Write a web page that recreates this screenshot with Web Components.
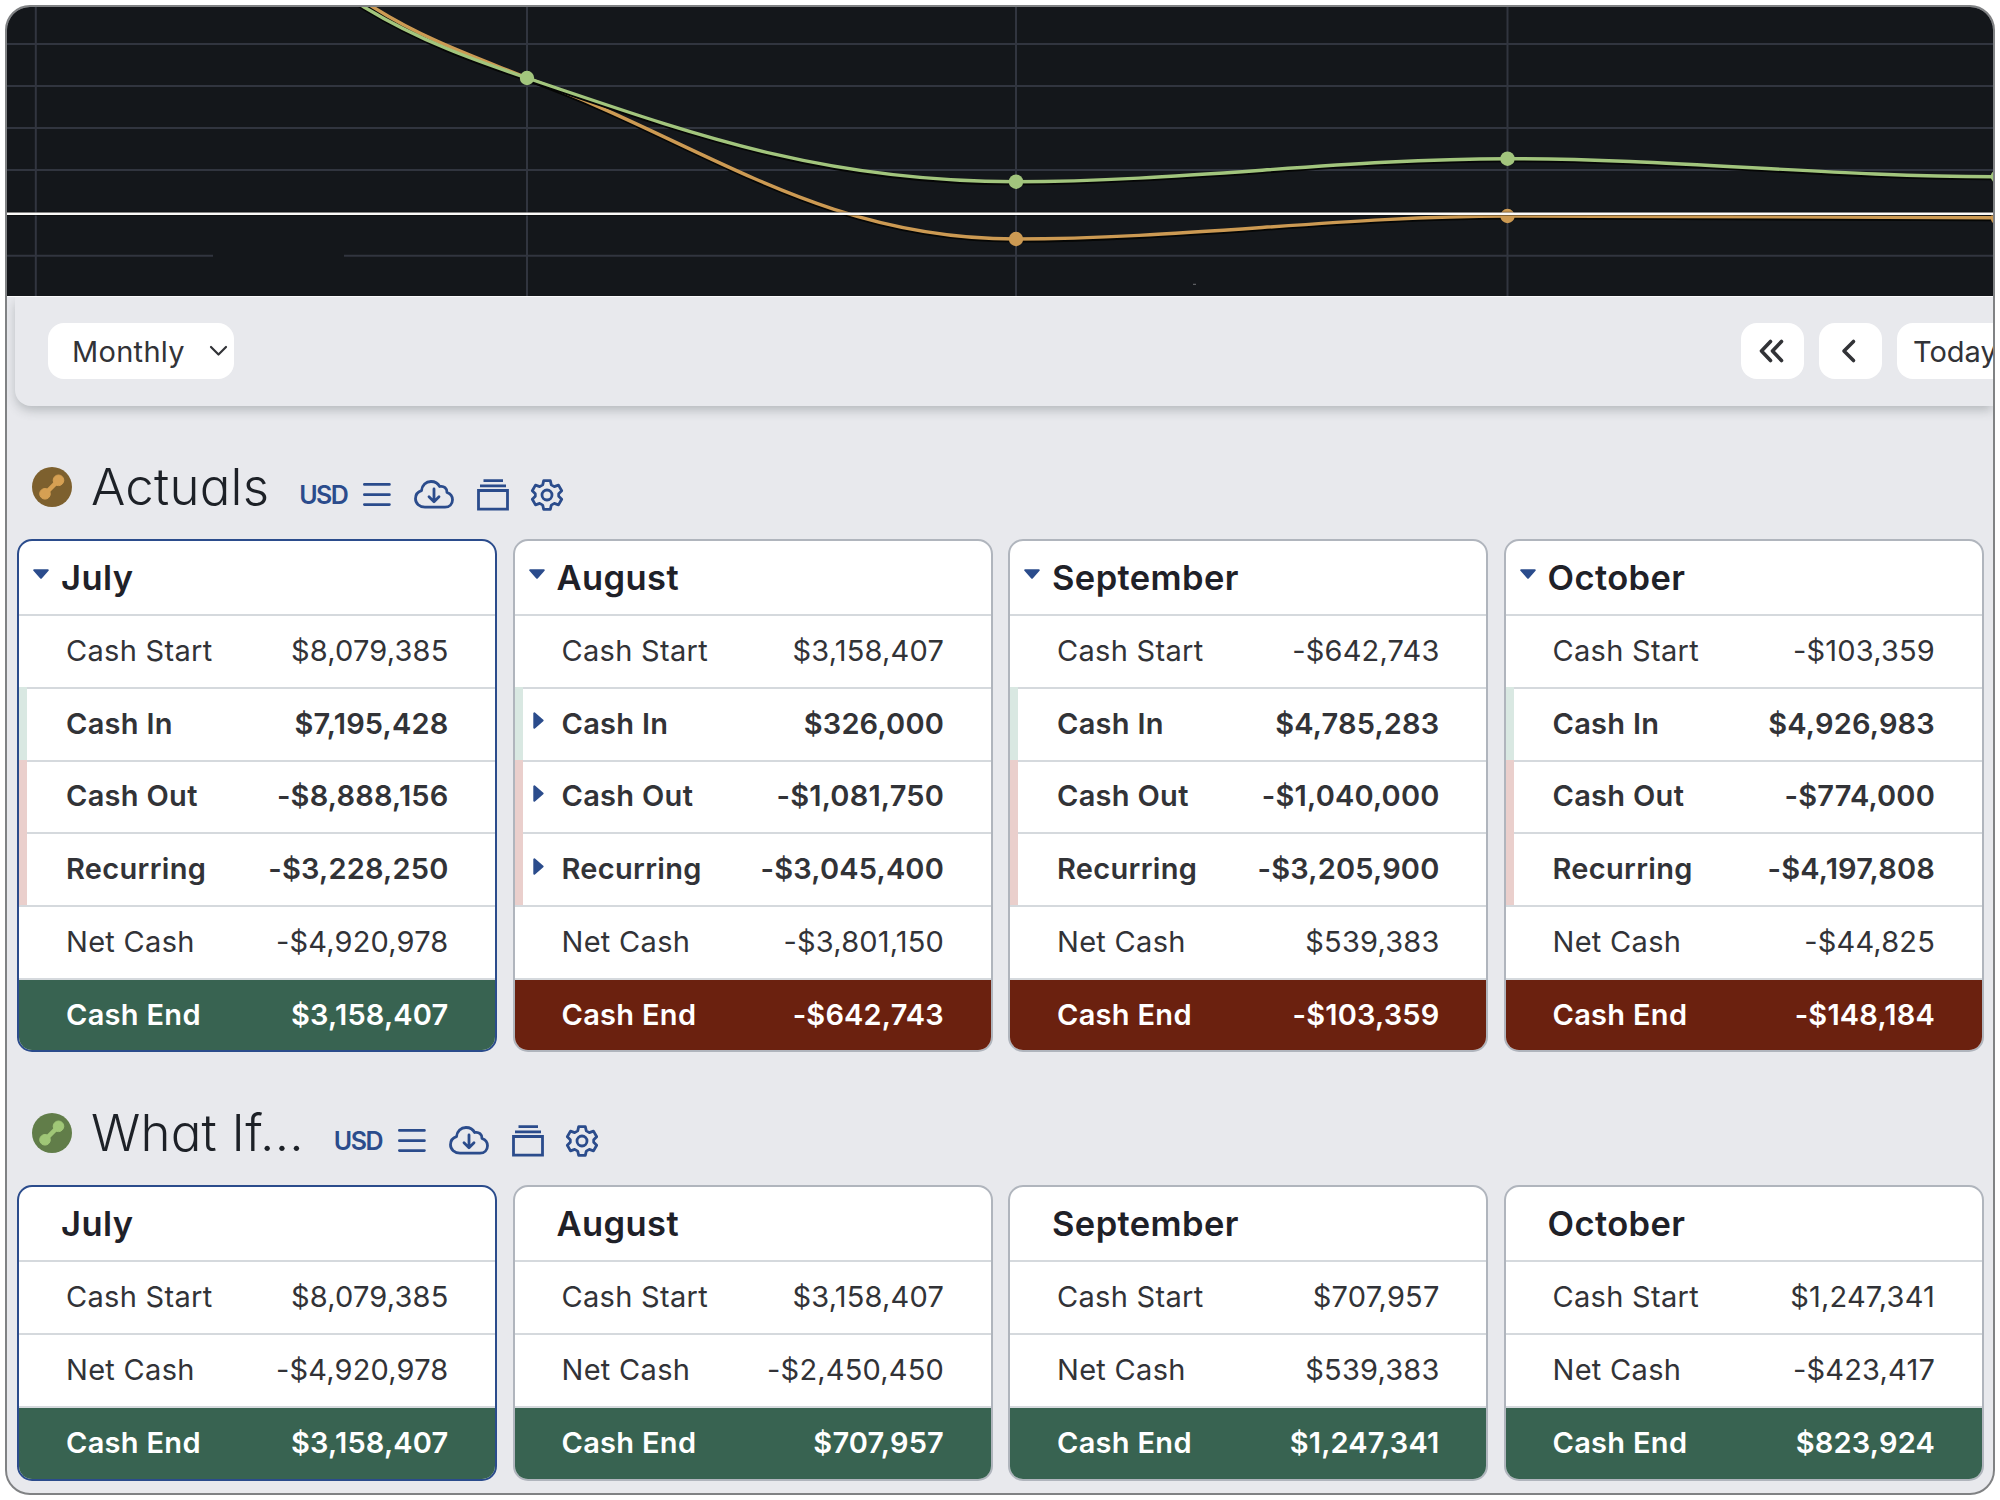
<!DOCTYPE html>
<html lang="en">
<head>
<meta charset="utf-8">
<title>Cash forecast</title>
<style>
    body {
        margin: 0;
        padding: 5px;
        background: #fff;
        font-family: Inter, "Liberation Sans", sans-serif;
        color: #323337;
        --blue: #2b4c8c;
        --line: #d5d9dd;
    }
</style>
</head>
<body>
<cash-frame>
    <forecast-chart></forecast-chart>
    <period-bar></period-bar>
    <plan-section name="Actuals" plan="actuals"></plan-section>
    <plan-section name="What If..." plan="whatif"></plan-section>
</cash-frame>

<script>
const plans = {
    actuals: {
        disc: "#7d602e",
        mark: "#d6a053",
        months: [
            {name: "July", current: true, toggle: true, rows: [
                ["Cash Start", "$8,079,385"], ["Cash In", "$7,195,428", "in"], ["Cash Out", "-$8,888,156", "out"],
                ["Recurring", "-$3,228,250", "out"], ["Net Cash", "-$4,920,978"], ["Cash End", "$3,158,407", "good"]]},
            {name: "August", toggle: true, expandable: true, rows: [
                ["Cash Start", "$3,158,407"], ["Cash In", "$326,000", "in"], ["Cash Out", "-$1,081,750", "out"],
                ["Recurring", "-$3,045,400", "out"], ["Net Cash", "-$3,801,150"], ["Cash End", "-$642,743", "bad"]]},
            {name: "September", toggle: true, rows: [
                ["Cash Start", "-$642,743"], ["Cash In", "$4,785,283", "in"], ["Cash Out", "-$1,040,000", "out"],
                ["Recurring", "-$3,205,900", "out"], ["Net Cash", "$539,383"], ["Cash End", "-$103,359", "bad"]]},
            {name: "October", toggle: true, rows: [
                ["Cash Start", "-$103,359"], ["Cash In", "$4,926,983", "in"], ["Cash Out", "-$774,000", "out"],
                ["Recurring", "-$4,197,808", "out"], ["Net Cash", "-$44,825"], ["Cash End", "-$148,184", "bad"]]}
        ]
    },
    whatif: {
        disc: "#617d49",
        mark: "#a0c777",
        months: [
            {name: "July", current: true, rows: [
                ["Cash Start", "$8,079,385"], ["Net Cash", "-$4,920,978"], ["Cash End", "$3,158,407", "good"]]},
            {name: "August", rows: [
                ["Cash Start", "$3,158,407"], ["Net Cash", "-$2,450,450"], ["Cash End", "$707,957", "good"]]},
            {name: "September", rows: [
                ["Cash Start", "$707,957"], ["Net Cash", "$539,383"], ["Cash End", "$1,247,341", "good"]]},
            {name: "October", rows: [
                ["Cash Start", "$1,247,341"], ["Net Cash", "-$423,417"], ["Cash End", "$823,924", "good"]]}
        ]
    }
};

class CashFrame extends HTMLElement {
    constructor() {
        super();
        this.attachShadow({mode: "open"});
        this.shadowRoot.innerHTML = `
            <style>
                :host {
                    display: flex;
                    flex-direction: column;
                    box-sizing: border-box;
                    width: 1990px;
                    height: 1490px;
                    border: 2px solid #808284;
                    border-radius: 25px;
                    background: #e8e9ed;
                    overflow: hidden;
                }
            </style>
            <slot></slot>
        `;
    }
}

class ForecastChart extends HTMLElement {
    constructor() {
        super();
        this.attachShadow({mode: "open"});
        this.shadowRoot.innerHTML = `
            <style>
                :host { display: block; flex: none; height: 289px; background: #14171b; border-bottom: 1px solid #fbfbfc; }
                svg { display: block; }
                .grid { stroke: #31353f; stroke-width: 2; }
                .line { fill: none; stroke-width: 3.4; }
                .shade { fill: none; stroke: #050605; stroke-width: 3; }
            </style>
            <svg width="1986" height="289" viewBox="7 7 1986 289"></svg>
        `;
    }

    connectedCallback() {
        const columns = [35.8, 527, 1016, 1507.5];
        const rows = [44, 86, 128, 170];
        const series = [
            {color: "#cc9a53", points: [[1016, 239], [1507.5, 216], [1998, 217.8]],
             d: "M340 -14 C351 -7 362 0 373 7 C425 40 478 58 527 78 C698 139.6 818 239 1016 239 C1180 239 1344 216 1507.5 216 C1671 216 1834 217.8 1998 217.8"},
            {color: "#a2c57d", points: [[527, 78], [1016, 181.7], [1507.5, 158.7], [1998, 176.5]],
             d: "M330 -15 C342 -8 353 0 364 7 C420 41 474 60 527 78 C698 136 824 181.7 1016 181.7 C1180 181.7 1344 158.7 1507.5 158.7 C1671 158.7 1834 176.8 1998 176.8"}
        ];
        let out = "";
        rows.forEach(y => out += `<path class="grid" d="M7 ${y}H1993"/>`);
        out += `<path class="grid" d="M7 255.7H213M344 255.7H1993"/>`;
        columns.forEach(x => out += `<path class="grid" d="M${x} 7V296"/>`);
        series.forEach(s => {
            out += `<path class="shade" d="${s.d}" transform="translate(0 2)"/><path class="line" d="${s.d}" stroke="${s.color}"/>`;
            s.points.forEach(p => out += `<circle cx="${p[0]}" cy="${p[1]}" r="7.2" fill="${s.color}"/>`);
        });
        // zero line sits over both series
        out += `<path d="M7 213.7H1993" stroke="#000" stroke-opacity="0.5" stroke-width="4"/><path d="M7 213.7H1993" stroke="#fbfaf8" stroke-width="2.4"/>`;
        out += `<path d="M1193 284.3h3" stroke="#6d7074" stroke-width="1"/>`;
        this.shadowRoot.querySelector("svg").innerHTML = out;
    }
}

class PeriodBar extends HTMLElement {
    constructor() {
        super();
        this.attachShadow({mode: "open"});
        this.shadowRoot.innerHTML = `
            <style>
                :host {
                    display: flex;
                    flex: none;
                    align-items: center;
                    box-sizing: border-box;
                    height: 109px;
                    margin-left: 8px;
                    padding: 0 0 1px 33px;
                    border-bottom-left-radius: 16px;
                    box-shadow: 0 5px 11px -1px rgba(60, 68, 72, 0.3);
                    clip-path: inset(0 0 -30px -8px);
                    background: #e8e9ed;
                    font-size: 29px;
                }
                .box {
                    display: flex;
                    flex: none;
                    align-items: center;
                    box-sizing: border-box;
                    height: 56px;
                    border-radius: 16px;
                    background: #fff;
                }
                .select { width: 186px; padding: 0 6px 0 24px; justify-content: space-between; letter-spacing: 0.3px; }
                .pager { display: flex; gap: 15.5px; margin-left: auto; margin-right: -30px; }
                .step { width: 62.5px; padding-right: 2px; justify-content: center; }
                .today { width: 126px; padding-left: 16px; }
                svg { fill: none; stroke: #323337; stroke-linecap: round; stroke-linejoin: round; }
            </style>
            <div class="box select">Monthly
                <svg width="19" height="12" viewBox="0 0 19 12" stroke-width="2.2"><path d="M2 2l7.5 7.5L17 2"/></svg>
            </div>
            <div class="pager">
                <div class="box step"><svg width="28" height="26" viewBox="0 0 28 26" stroke-width="3.6"><path d="M13.500 3.500L4.500 13l9 9.500M24.500 3.500L15.500 13l9 9.500"/></svg></div>
                <div class="box step"><svg width="16" height="26" viewBox="0 0 16 26" stroke-width="3.6"><path d="M12.500 3.500L3 13l9.500 9.500"/></svg></div>
                <div class="box today">Today</div>
            </div>
        `;
    }
}

class PlanTools extends HTMLElement {
    constructor() {
        super();
        this.attachShadow({mode: "open"});
        this.shadowRoot.innerHTML = `
            <style>
                :host { display: flex; align-items: center; color: var(--blue); font-size: 25px; font-weight: 600; }
                span { width: 64px; letter-spacing: -1.5px; }
                svg { fill: none; stroke: currentColor; stroke-width: 2.8; overflow: visible; }
                .menu { margin-right: 23px; }
                .cloud { margin-right: 23px; }
                .stack { margin-right: 22px; }
            </style>
            <span>USD</span>
            <svg class="menu" width="28" height="32" viewBox="0 0 28 32" stroke-linecap="round"><path d="M1.4 5.4h25M1.4 15.7h25M1.4 25.6h25"/></svg>
            <svg class="cloud" width="40" height="32" viewBox="0 0 40 32" stroke-linecap="round" stroke-linejoin="round">
                <path d="M11 28.2C5.500 28.200 1.500 24.500 1.500 19.800C1.500 15.800 4 12.800 7.500 11.700C8 6 12 2.500 17 2.500C21 2.500 24 4.300 25.700 7.500C30 6.500 33.200 9.500 33 13.500C36.500 14.700 38.500 17.500 38.500 20.800C38.500 25 35.500 28.200 31 28.200Z"/>
                <path d="M20 10v12.500M15 17.800l5 5 5-5"/>
            </svg>
            <svg class="stack" width="32" height="32" viewBox="0 0 32 32"><path d="M6.500 1.700h19.500M3 6.800h26M1.500 11.500h29v18.600h-29z"/></svg>
            <svg class="gear" width="32" height="32" viewBox="0 0 32 32" stroke-linejoin="round">
                <path d="M12.700 1.600h6.600l1 4.300 3 1.700 4.200-1.500 3.200 5.600-3 3v2.600l3 3-3.200 5.600-4.200-1.500-3 1.700-1 4.300h-6.600l-1-4.300-3-1.700-4.200 1.500-3.200-5.600 3-3v-2.600l-3-3 3.200-5.600 4.200 1.500 3-1.700z"/>
                <circle cx="16" cy="16" r="5"/>
            </svg>
        `;
    }
}

class PlanSection extends HTMLElement {
    constructor() {
        super();
        this.attachShadow({mode: "open"});
    }

    connectedCallback() {
        const plan = plans[this.getAttribute("plan")];
        this.shadowRoot.innerHTML = `
            <style>
                :host { display: block; flex: none; }
                header { display: flex; align-items: center; height: 60px; padding: 51px 0 22px 25px; }
                h1 {
                    margin: 0 30px 0 19px;
                    color: #1d2127;
                    font-size: 51px;
                    font-weight: 300;
                    line-height: 60px;
                    letter-spacing: 0.2px;
                    font-feature-settings: "cv11";
                    white-space: pre;
                }
                plan-tools { margin-top: 16px; }
                .months { display: grid; grid-template-columns: repeat(4, 480px); gap: 15.5px; padding-left: 10px; }
            </style>
            <header>
                <svg width="40" height="40" viewBox="0 0 40 40">
                    <circle cx="20" cy="20" r="20" fill="${plan.disc}"/>
                    <g fill="${plan.mark}" stroke="${plan.mark}">
                        <circle cx="26.500" cy="13.300" r="5.300"/>
                        <circle cx="13" cy="26.800" r="5.300"/>
                        <path d="M26.500 13.300L13 26.800" stroke-width="4.500"/>
                    </g>
                </svg>
                <h1>${this.getAttribute("name")}</h1>
                <plan-tools></plan-tools>
            </header>
            <div class="months"></div>
        `;
        const months = this.shadowRoot.querySelector(".months");
        plan.months.forEach(m => {
            const card = document.createElement("month-card");
            card.month = m;
            months.append(card);
        });
    }
}

class MonthCard extends HTMLElement {
    constructor() {
        super();
        this.attachShadow({mode: "open"});
    }

    connectedCallback() {
        const m = this.month;
        this.toggleAttribute("current", !!m.current);
        this.shadowRoot.innerHTML = `
            <style>
                :host {
                    display: block;
                    border: 2px solid #b0b5bd;
                    border-radius: 15px;
                    box-sizing: border-box;
                    background: #fff;
                    overflow: hidden;
                }
                :host([current]) { border-color: var(--blue); }
                header { display: flex; align-items: center; height: 73px; padding-left: 14px; }
                h2 { margin: 0; color: #1f2128; font-size: 34.5px; font-weight: 600; letter-spacing: 0.4px; }
                .slot { width: 28px; height: 17px; }
                svg { display: block; fill: var(--blue); stroke: var(--blue); stroke-width: 2; stroke-linejoin: round; }
            </style>
            <header>
                <div class="slot">${m.toggle ? '<svg width="16" height="10" viewBox="0 0 16 10"><path d="M1.200 1.200h13.600L8 8.800z"/></svg>' : ""}</div>
                <h2>${m.name}</h2>
            </header>
        `;
        m.rows.forEach(r => {
            const row = document.createElement("cash-row");
            row.setAttribute("kind", r[2] || "plain");
            row.toggleAttribute("expandable", !!m.expandable && (r[2] == "in" || r[2] == "out"));
            row.innerHTML = `<span slot="label">${r[0]}</span><span slot="value">${r[1]}</span>`;
            this.shadowRoot.append(row);
        });
    }
}

class CashRow extends HTMLElement {
    constructor() {
        super();
        this.attachShadow({mode: "open"});
        this.shadowRoot.innerHTML = `
            <style>
                :host { display: flex; height: 72.8px; font-size: 29px; letter-spacing: 0.3px; }
                .bar { flex: none; width: 0; }
                .body {
                    display: flex;
                    flex: 1;
                    align-items: center;
                    box-sizing: border-box;
                    padding: 0 46.500px 2px 47px;
                    border-top: 2px solid var(--line);
                }
                .arrow { display: none; width: 29px; margin-top: -5px; }
                .arrow svg { display: block; fill: var(--blue); stroke: var(--blue); stroke-width: 2; stroke-linejoin: round; }
                slot[name=value] { display: block; margin-left: auto; letter-spacing: 0.18px; }
                :host([kind=in]) .bar { width: 8px; background: #d9e8e2; }
                :host([kind=out]) .bar { width: 8px; background: #eacfcc; }
                :host([kind=in]) .body, :host([kind=out]) .body { padding-left: 39px; font-weight: 600; }
                :host([kind][expandable]) .body { padding-left: 10px; }
                :host([expandable]) .arrow { display: block; }
                :host([kind=good]) .body, :host([kind=bad]) .body { padding-bottom: 1px; color: #fff; font-weight: 600; }
                :host([kind=good]), :host([kind=bad]) { height: 72.5px; }
                :host([kind=good]) .body { background: #386351; background-clip: padding-box; }
                :host([kind=bad]) .body { background: #6b210f; background-clip: padding-box; }
            </style>
            <div class="bar"></div>
            <div class="body">
                <div class="arrow"><svg width="11" height="17" viewBox="0 0 11 17"><path d="M1.300 1.300v14.400L9.600 8.500z"/></svg></div>
                <slot name="label"></slot>
                <slot name="value"></slot>
            </div>
        `;
    }
}

window.customElements.define("cash-frame", CashFrame);
window.customElements.define("forecast-chart", ForecastChart);
window.customElements.define("period-bar", PeriodBar);
window.customElements.define("plan-tools", PlanTools);
window.customElements.define("cash-row", CashRow);
window.customElements.define("month-card", MonthCard);
window.customElements.define("plan-section", PlanSection);
</script>
</body>
</html>
